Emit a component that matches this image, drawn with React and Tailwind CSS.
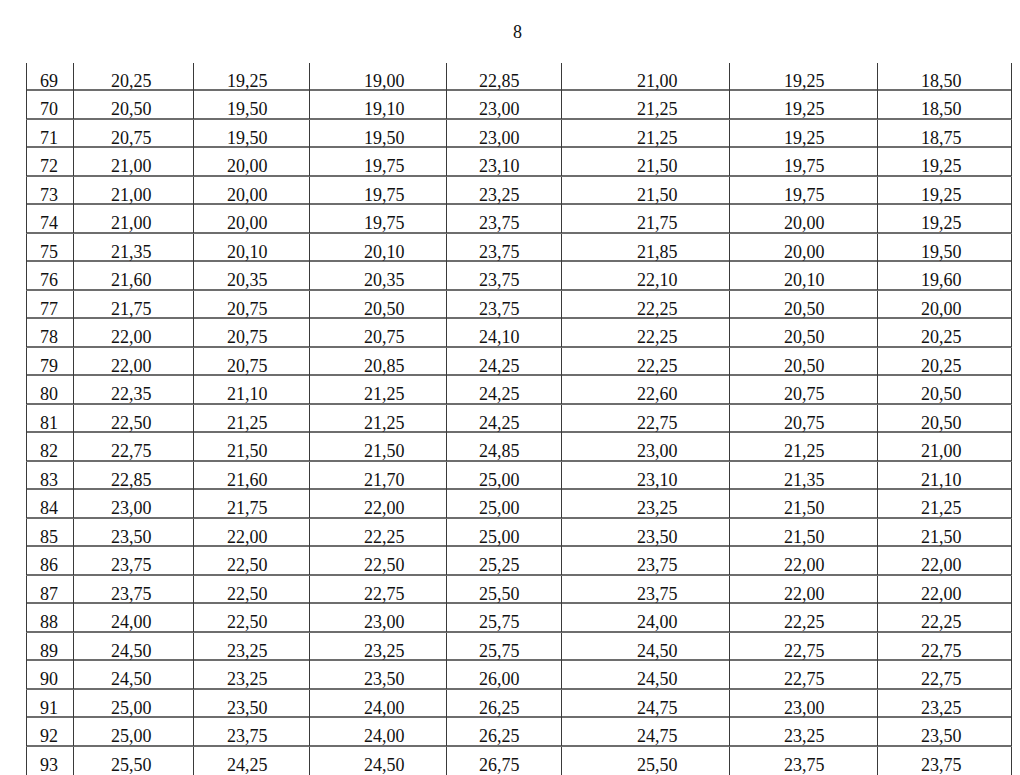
import React from "react";

const rows = [
  ["69", "20,25", "19,25", "19,00", "22,85", "21,00", "19,25", "18,50"],
  ["70", "20,50", "19,50", "19,10", "23,00", "21,25", "19,25", "18,50"],
  ["71", "20,75", "19,50", "19,50", "23,00", "21,25", "19,25", "18,75"],
  ["72", "21,00", "20,00", "19,75", "23,10", "21,50", "19,75", "19,25"],
  ["73", "21,00", "20,00", "19,75", "23,25", "21,50", "19,75", "19,25"],
  ["74", "21,00", "20,00", "19,75", "23,75", "21,75", "20,00", "19,25"],
  ["75", "21,35", "20,10", "20,10", "23,75", "21,85", "20,00", "19,50"],
  ["76", "21,60", "20,35", "20,35", "23,75", "22,10", "20,10", "19,60"],
  ["77", "21,75", "20,75", "20,50", "23,75", "22,25", "20,50", "20,00"],
  ["78", "22,00", "20,75", "20,75", "24,10", "22,25", "20,50", "20,25"],
  ["79", "22,00", "20,75", "20,85", "24,25", "22,25", "20,50", "20,25"],
  ["80", "22,35", "21,10", "21,25", "24,25", "22,60", "20,75", "20,50"],
  ["81", "22,50", "21,25", "21,25", "24,25", "22,75", "20,75", "20,50"],
  ["82", "22,75", "21,50", "21,50", "24,85", "23,00", "21,25", "21,00"],
  ["83", "22,85", "21,60", "21,70", "25,00", "23,10", "21,35", "21,10"],
  ["84", "23,00", "21,75", "22,00", "25,00", "23,25", "21,50", "21,25"],
  ["85", "23,50", "22,00", "22,25", "25,00", "23,50", "21,50", "21,50"],
  ["86", "23,75", "22,50", "22,50", "25,25", "23,75", "22,00", "22,00"],
  ["87", "23,75", "22,50", "22,75", "25,50", "23,75", "22,00", "22,00"],
  ["88", "24,00", "22,50", "23,00", "25,75", "24,00", "22,25", "22,25"],
  ["89", "24,50", "23,25", "23,25", "25,75", "24,50", "22,75", "22,75"],
  ["90", "24,50", "23,25", "23,50", "26,00", "24,50", "22,75", "22,75"],
  ["91", "25,00", "23,50", "24,00", "26,25", "24,75", "23,00", "23,25"],
  ["92", "25,00", "23,75", "24,00", "26,25", "24,75", "23,25", "23,50"],
  ["93", "25,50", "24,25", "24,50", "26,75", "25,50", "23,75", "23,75"],
];

const cellCls = [
  "pl-[13px] border-l border-[#3a3a3a]",
  "pl-[37px] border-l border-[#3a3a3a]",
  "pl-[33px] border-l border-[#3a3a3a]",
  "pl-[54px] border-l border-[#3a3a3a]",
  "pl-[32px] border-l border-[#3a3a3a]",
  "pl-[75px] border-l border-[#3a3a3a]",
  "pl-[54px] border-l border-[#3a3a3a]",
  "pl-[43px] border-l border-r border-[#3a3a3a]",
];

export default function App() {
  return (
    <div
      className="w-[1020px] h-[775px] overflow-hidden bg-white text-[#111]"
      style={{ fontFamily: '"Liberation Serif", "Times New Roman", serif' }}
    >
      <div className="ml-[26px] w-[986px] pt-[22px] pr-[3px] text-center text-[18px] leading-[20px]">
        8
      </div>
      <div className="ml-[26px] mt-[20.5px] w-[986px]">
        {rows.map((r, idx) => (
          <div
            key={r[0]}
            className={
              idx === rows.length - 1
                ? "grid grid-cols-[47px_120px_116px_137px_115px_168px_148px_135px] h-[30px]"
                : "grid grid-cols-[47px_120px_116px_137px_115px_168px_148px_135px] h-[28.52px] border-b-2 border-[#6e6e6e]"
            }
          >
            {r.map((v, i) => (
              <div
                key={i}
                className={`${cellCls[i]} pt-[8px] text-[18px] leading-[20px] whitespace-nowrap`}
              >
                {v}
              </div>
            ))}
          </div>
        ))}
      </div>
    </div>
  );
}
